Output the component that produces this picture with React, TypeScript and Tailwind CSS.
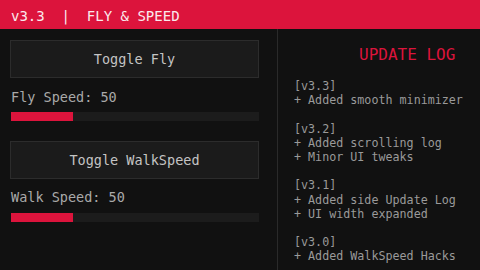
const mono = { fontFamily: '"DejaVu Sans Mono", "Liberation Mono", monospace' };

const log = [
  { v: 'v3.3', items: ['Added smooth minimizer'] },
  { v: 'v3.2', items: ['Added scrolling log', 'Minor UI tweaks'] },
  { v: 'v3.1', items: ['Added side Update Log', 'UI width expanded'] },
  { v: 'v3.0', items: ['Added WalkSpeed Hacks'] },
];

function Slider({ pct }: { pct: number }) {
  return (
    <div className="ml-[1px] h-[9px] bg-[#1c1c1c]">
      <div className="h-full bg-[#dc143c]" style={{ width: `${pct}%` }} />
    </div>
  );
}

export default function App() {
  return (
    <div className="w-[480px] h-[270px] overflow-hidden bg-[#111111] flex flex-col" style={mono}>
      {/* Header */}
      <div className="h-[29px] shrink-0 bg-[#dc143c] pl-[11px] pt-[3px] text-[14px] leading-[26px] text-[#fbe9ed] whitespace-pre">
        {'v3.3  |  FLY & SPEED'}
      </div>

      <div className="flex flex-1 min-h-0">
        {/* Controls */}
        <div className="w-[277px] shrink-0 pl-[10px] pr-[18px]">
          <button className="mt-[11px] w-full h-[38px] bg-[#1b1b1b] border border-[#2c2c2c] text-[13.5px] pt-[1px] text-[#c4c4c4]">
            Toggle Fly
          </button>
          <div className="mt-[11px] ml-[1px] text-[13.5px] leading-[16px] text-[#a9a9a9]">Fly Speed: 50</div>
          <div className="mt-[7px]">
            <Slider pct={25} />
          </div>

          <button className="mt-[20px] w-full h-[38px] bg-[#1b1b1b] border border-[#2c2c2c] text-[13.5px] pt-[1px] text-[#c4c4c4]">
            Toggle WalkSpeed
          </button>
          <div className="mt-[10px] ml-[1px] text-[13.5px] leading-[16px] text-[#a9a9a9]">Walk Speed: 50</div>
          <div className="mt-[8px]">
            <Slider pct={25} />
          </div>
        </div>

        {/* Update log */}
        <div className="flex-1 border-l border-[#2a2a2a] pl-[16px] overflow-hidden">
          <div className="mt-[16px] pl-[65px] text-[16px] leading-[20px] text-[#dc143c]">UPDATE LOG</div>
          <div className="mt-[14px] text-[11.7px] leading-[14.2px] text-[#9a9a9a] whitespace-pre">
            {log.map((b, i) => (
              <div key={b.v} className={i > 0 ? 'mt-[14.2px]' : ''}>
                <div>[{b.v}]</div>
                {b.items.map(t => (
                  <div key={t}>+ {t}</div>
                ))}
              </div>
            ))}
          </div>
        </div>
      </div>
    </div>
  );
}
